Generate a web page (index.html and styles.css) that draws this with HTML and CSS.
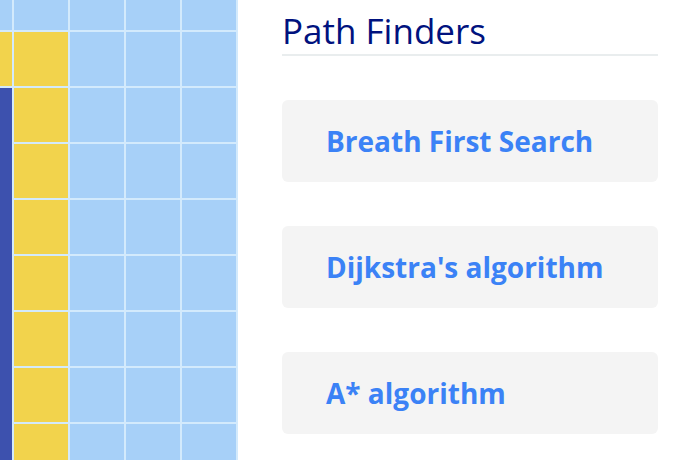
FILE: index.html
```html
<!DOCTYPE html>
<html lang="en">
<head>
<meta charset="utf-8">
<title>Path Finders</title>
<link rel="stylesheet" href="styles.css">
</head>
<body>
<div class="board-wrap">
  <div class="board">
    <div class="cell wall"></div>
    <div class="cell"></div><div class="cell"></div><div class="cell"></div><div class="cell"></div><div class="cell"></div>
    <div class="cell path"></div><div class="cell path"></div><div class="cell"></div><div class="cell"></div><div class="cell"></div>
    <div class="cell path"></div><div class="cell"></div><div class="cell"></div><div class="cell"></div>
    <div class="cell path"></div><div class="cell"></div><div class="cell"></div><div class="cell"></div>
    <div class="cell path"></div><div class="cell"></div><div class="cell"></div><div class="cell"></div>
    <div class="cell path"></div><div class="cell"></div><div class="cell"></div><div class="cell"></div>
    <div class="cell path"></div><div class="cell"></div><div class="cell"></div><div class="cell"></div>
    <div class="cell path"></div><div class="cell"></div><div class="cell"></div><div class="cell"></div>
    <div class="cell path"></div><div class="cell"></div><div class="cell"></div><div class="cell"></div>
  </div>
</div>
<main class="panel">
  <h1 class="title">Path Finders</h1>
  <ul class="algos">
    <li class="algo">Breath First Search</li>
    <li class="algo">Dijkstra's algorithm</li>
    <li class="algo">A* algorithm</li>
  </ul>
</main>
</body>
</html>
```
FILE: styles.css
```css
html, body {
  margin: 0;
  padding: 0;
  background: #ffffff;
}
body {
  display: flex;
  width: 700px;
  height: 460px;
  overflow: hidden;
  font-family: "Open Sans", "Noto Sans", sans-serif;
}
.board-wrap {
  flex: 0 0 238px;
  height: 460px;
  overflow: hidden;
}
.board {
  display: grid;
  grid-template-columns: repeat(5, 54px);
  grid-auto-rows: 54px;
  gap: 2px;
  padding: 0 2px 2px 0;
  margin: -24px 0 0 -42px;
  width: max-content;
  background: #d3eafc;
}
.cell {
  background: #a7d0f8;
}
.cell.path {
  background: #f2d34c;
}
.cell.wall {
  background: #3d51ae;
  grid-column: 1;
  grid-row: 3 / span 7;
}
.panel {
  flex: 1;
  padding: 0 42px 0 44px;
}
.title {
  margin: 7px 0 0;
  font-size: 35px;
  font-weight: 400;
  line-height: 47px;
  color: #00127e;
  border-bottom: 2px solid #e9edee;
}
.algos {
  list-style: none;
  margin: 44px 0 0;
  padding: 0;
  display: flex;
  flex-direction: column;
  gap: 44px;
}
.algo {
  background: #f4f4f4;
  border-radius: 6px;
  padding: 22px 44px;
  font-size: 28px;
  font-weight: 700;
  line-height: 38px;
  color: #3b82f6;
}
```
